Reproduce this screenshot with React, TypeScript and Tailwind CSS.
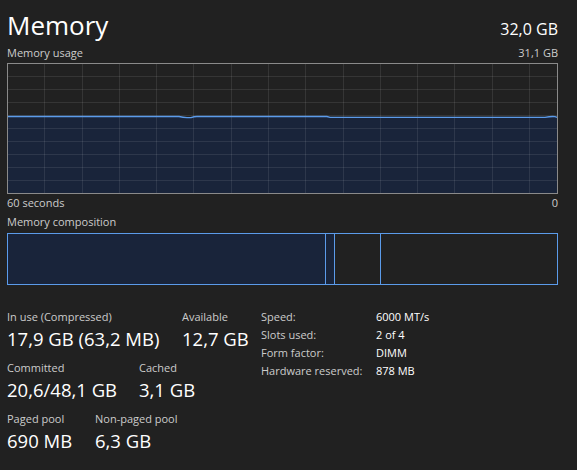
import React from "react";

const FONT = { fontFamily: '"Open Sans", "Noto Sans", sans-serif' };

const vLines = [37, 75, 112, 149, 186, 224, 261, 298, 336, 373, 410, 447, 485, 522];
const hLines = [13, 26, 39, 52, 65, 78, 91, 104, 117];

function UsageGraph() {
	// memory line, points relative to the graph box
	const line = "M1 53.5 L172 53.5 Q176 54.6 180 54.6 L184 54.6 Q187 53.5 190 53.5 L320 53.5 L323 54.3 L538 54.3 Q544 53.2 548 53.6 L550 54.3";
	const fill = `${line} L550 130 L1 130 Z`;
	return (
		<svg width="551" height="131" className="block">
			<path d={fill} fill="#19243a" />
			{vLines.map((x) => (
				<line key={x} x1={x + 0.5} y1={0} x2={x + 0.5} y2={131} stroke="#ffffff" strokeOpacity="0.09" />
			))}
			{hLines.map((y) => (
				<line key={y} x1={0} y1={y + 0.5} x2={551} y2={y + 0.5} stroke="#ffffff" strokeOpacity="0.09" />
			))}
			<path d={line} fill="none" stroke="#5b9bea" strokeWidth="1.3" />
			<rect x="0.5" y="0.5" width="550" height="130" fill="none" stroke="#8a8a8a" />
		</svg>
	);
}

function Stat({ label, value, w, gap = "mt-[2px]" }: { label: string; value: string; w: string; gap?: string }) {
	return (
		<div className={`${w} shrink-0`}>
			<div className="text-[11px] leading-[16px] text-[#cccccc]">{label}</div>
			<div className={`${gap} text-[18.5px] leading-[24px] text-white`}>{value}</div>
		</div>
	);
}

const specs = [
	["Speed:", "6000 MT/s"],
	["Slots used:", "2 of 4"],
	["Form factor:", "DIMM"],
	["Hardware reserved:", "878 MB"],
];

export default function App() {
	return (
		<div style={FONT} className="w-[577px] h-[470px] bg-[#212121] px-[7px] pt-[8px] overflow-hidden">
			<div className="flex items-baseline justify-between w-[551px] h-[34px]">
				<div className="text-[26px] leading-[34px] text-white">Memory</div>
				<div className="text-[16px] leading-none text-white">32,0 GB</div>
			</div>
			<div className="mt-[3px] flex justify-between w-[551px] text-[11px] leading-[16px] text-[#cccccc]">
				<span>Memory usage</span>
				<span>31,1 GB</span>
			</div>
			<div className="mt-[2px]">
				<UsageGraph />
			</div>
			<div className="mt-[1px] flex justify-between w-[551px] text-[11px] leading-[16px] text-[#cccccc]">
				<span>60 seconds</span>
				<span>0</span>
			</div>
			<div className="mt-[3px] text-[11px] leading-[16px] text-[#cccccc]">Memory composition</div>
			<div className="mt-[3px] flex w-[551px] h-[52px] border border-[#5b9bea]">
				<div className="w-[317px] bg-[#19243a]" />
				<div className="w-[9px] bg-[#19243a] border-l border-[#5b9bea]" />
				<div className="w-[46px] border-l border-[#5b9bea]" />
				<div className="flex-1 border-l border-[#5b9bea]" />
			</div>
			<div className="mt-[24px] flex">
				<div className="w-[254px] shrink-0">
					<div className="flex">
						<Stat w="w-[175px]" label="In use (Compressed)" value="17,9 GB (63,2 MB)" />
						<Stat w="w-[79px]" label="Available" value="12,7 GB" />
					</div>
					<div className="mt-[9px] flex">
						<Stat w="w-[132px]" label="Committed" value="20,6/48,1 GB" />
						<Stat w="w-[100px]" label="Cached" value="3,1 GB" />
					</div>
					<div className="mt-[9px] flex">
						<Stat w="w-[88px]" label="Paged pool" value="690 MB" />
						<Stat w="w-[100px]" label="Non-paged pool" value="6,3 GB" />
					</div>
				</div>
				<div className="-mt-[1px]">
					{specs.map(([k, v]) => (
						<div key={k} className="flex text-[11px] leading-[18px]">
							<span className="w-[115px] text-[#cccccc]">{k}</span>
							<span className="text-white">{v}</span>
						</div>
					))}
				</div>
			</div>
		</div>
	);
}
